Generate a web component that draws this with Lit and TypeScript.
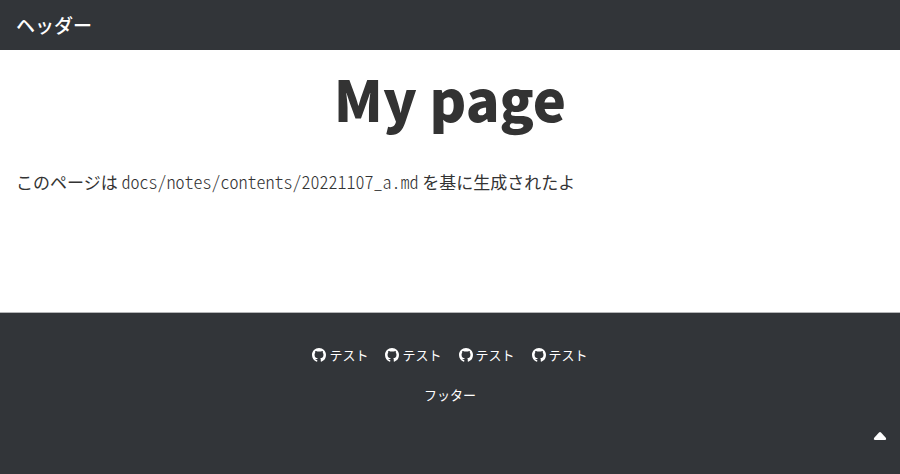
import { LitElement, html, css } from "lit";
import { customElement } from "lit/decorators.js";

@customElement("app-root")
export class AppRoot extends LitElement {
  static styles = css`
    :host {
      display: flex;
      flex-direction: column;
      min-height: 100vh;
      background: #ffffff;
      color: #333333;
      font-family: "Noto Sans CJK JP", sans-serif;
      font-size: 17px;
      line-height: 24px;
    }
    header {
      padding: 13px 16px;
      background: #323539;
      color: #ffffff;
      font-size: 19px;
      font-weight: 500;
    }
    main {
      flex: 1;
      padding: 0 16px;
    }
    h1 {
      margin: 0;
      padding: 12px 0 20px;
      font-size: 56px;
      line-height: 72px;
      font-weight: 900;
      text-align: center;
    }
    p {
      margin: 0;
      padding: 15px 0;
    }
    code {
      font-family: "Noto Sans CJK JP", monospace;
      font-size: 18px;
      font-weight: 300;
      font-feature-settings: "hwid";
    }
    footer {
      display: flex;
      flex-direction: column;
      align-items: center;
      gap: 16px;
      padding: 30px 16px;
      min-height: 101px;
      border-top: 1px solid #b5b6b8;
      background: #323539;
      background-clip: padding-box;
      color: #ffffff;
      font-size: 13px;
    }
    nav {
      display: flex;
      gap: 17px;
    }
    a {
      display: flex;
      align-items: center;
      gap: 3px;
      color: inherit;
      text-decoration: none;
    }
    .mark {
      width: 14px;
      height: 14px;
      fill: currentColor;
    }
    .top {
      position: fixed;
      right: 8px;
      bottom: 26px;
      padding: 0;
      border: 0;
      background: none;
      color: #ffffff;
      width: 24px;
      height: 24px;
    }
    .caret {
      display: block;
      width: 14px;
      height: 8px;
      margin: auto;
      fill: currentColor;
    }
  `;

  private links = ["テスト", "テスト", "テスト", "テスト"];

  render() {
    return html`
      <header>ヘッダー</header>
      <main>
        <h1>My page</h1>
        <p>このページは <code>docs/notes/contents/20221107_a.md</code> を基に生成されたよ</p>
      </main>
      <footer>
        <nav>
          ${this.links.map(
            (label) => html`<a href="#">
              <svg class="mark" viewBox="0 0 16 16" aria-hidden="true">
                <path d="M8 0C3.58 0 0 3.58 0 8c0 3.54 2.29 6.53 5.47 7.59.4.07.55-.17.55-.38 0-.19-.01-.82-.01-1.49c-1.2.1-2-.3-2.5-1.2.6.3 1.4.3 2.54.08.07-.52.28-.87.51-1.07-1.78-.2-3.64-.89-3.64-3.95 0-.87.31-1.59.82-2.15-.08-.2-.36-1.02.08-2.12 0 0 .67-.21 2.2.82a7.6 7.6 0 0 1 4 0c1.53-1.04 2.2-.82 2.2-.82.44 1.1.16 1.92.08 2.12.51.56.82 1.27.82 2.15 0 3.07-1.87 3.75-3.65 3.95.29.25.54.73.54 1.48 0 1.07-.01 1.93-.01 2.2 0 .21.15.46.55.38A8.01 8.01 0 0 0 16 8c0-4.42-3.58-8-8-8z"/>
              </svg>${label}</a>`
          )}
        </nav>
        <span>フッター</span>
      </footer>
      <button class="top" aria-label="ページの先頭へ">
        <svg class="caret" viewBox="0 0 14 8" aria-hidden="true">
          <path d="M7 0Q7.5 0 8 .5L13 6Q13.8 7.8 12 8H2Q0.2 7.8 1 6L6 .5Q6.5 0 7 0Z"/>
        </svg>
      </button>
    `;
  }
}
